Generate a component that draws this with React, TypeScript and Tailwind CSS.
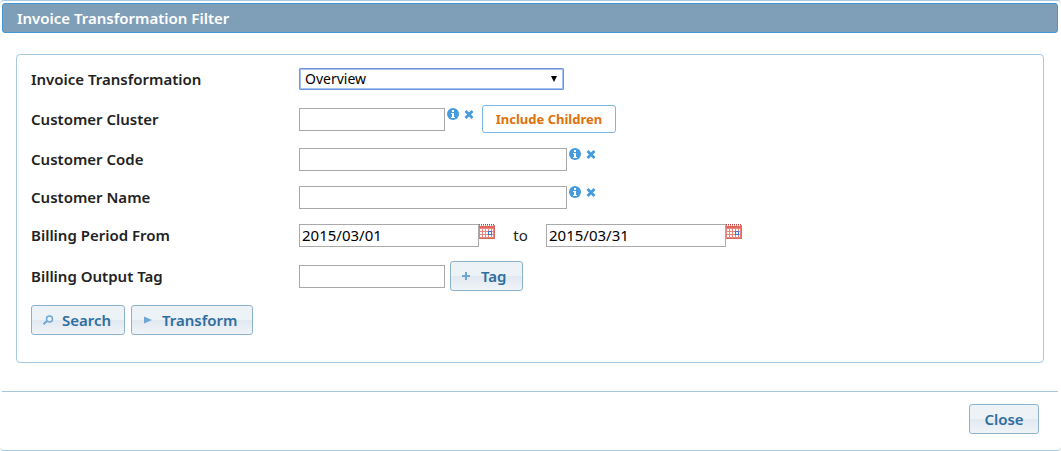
import clsx from "clsx";
import { ButtonHTMLAttributes, InputHTMLAttributes, PropsWithChildren } from "react";

type RowProps = PropsWithChildren<{
    label: string;
    htmlFor: string;
}>

function Row({ label, htmlFor, children }: RowProps) {
    return (
        <div className="flex min-h-6 items-center">
            <label htmlFor={htmlFor} className="w-[268px] shrink-0 text-[15px] leading-5 font-semibold text-[#222222]">
                {label}
            </label>
            <div className="flex items-center">{children}</div>
        </div>
    );
}

function TextBox({ className, ...props }: InputHTMLAttributes<HTMLInputElement>) {
    return (
        <input
            type="text"
            className={clsx("h-[23px] shrink-0 border border-[#a9a9a9] bg-white px-[2px] text-[15px] leading-5 text-black outline-none", className)}
            {...props}
        />
    );
}

function Button({ className, children, ...props }: ButtonHTMLAttributes<HTMLButtonElement>) {
    return (
        <button
            type="button"
            className={clsx(
                "flex h-[30px] shrink-0 items-center gap-2 rounded-[3px] border border-[#8db2ce] bg-linear-to-b from-[#edf2f6] from-50% via-[#e1e8f0] via-50% to-[#f0f4f8] text-[15px] leading-5 font-semibold text-[#2e6e9e]",
                className,
            )}
            {...props}
        >
            {children}
        </button>
    );
}

function LookupActions({ name }: { name: string }) {
    return (
        <div className="ml-[2px] flex items-center gap-[5px] self-start">
            <button type="button" aria-label={`${name} info`}>
                <svg width="12" height="12" viewBox="0 0 12 12" className="block">
                    <circle cx="6" cy="6" r="6" fill="#459bdd" />
                    <path d="M5 2h2v2H5zM4 5h3v4h1v1H4V9h1V6H4z" fill="#fff" />
                </svg>
            </button>
            <button type="button" aria-label={`Clear ${name}`}>
                <svg width="10" height="12" viewBox="0 0 10 12" className="block">
                    <path d="M1.500 3l7 7M8.500 3l-7 7" stroke="#459bdd" strokeWidth="2.800" />
                </svg>
            </button>
        </div>
    );
}

function CalendarButton({ name }: { name: string }) {
    return (
        <button type="button" aria-label={name} className="self-start">
            <svg width="16" height="15" viewBox="0 0 16 15" shapeRendering="crispEdges" className="block">
                <path d="M0 1h16v14H0z" fill="#ee857c" />
                <path d="M0 2h16v2H0z" fill="#e0685f" />
                <path d="M0 0h1v1H0zM2 0h1v1H2zM4 0h1v1H4zM6 0h1v1H6zM8 0h1v1H8zM10 0h1v1h-1zM12 0h1v1h-1zM14 0h1v1h-1z" fill="#a94a4a" />
                <path d="M1 1h1v1H1zM3 1h1v1H3zM5 1h1v1H5zM7 1h1v1H7zM9 1h1v1H9zM11 1h1v1h-1zM13 1h1v1h-1z" fill="#fff" />
                <path d="M1 5h2v2H1zM4 5h2v2H4zM7 5h2v2H7zM10 5h2v2h-2zM13 5h1v2h-1zM1 8h2v2H1zM4 8h2v2H4zM7 8h2v2H7zM10 8h2v2h-2zM13 8h1v2h-1zM1 11h2v2H1zM4 11h2v2H4zM7 11h2v2H7zM10 11h2v2h-2zM13 11h1v2h-1z" fill="#fff" />
                <path d="M9 7h4v4H9z" fill="#3f74e0" />
                <path d="M10 8h2v2h-2z" fill="#fff" />
                <path d="M0 14h16v1H0zM15 2h1v12h-1z" fill="#cf6a62" />
            </svg>
        </button>
    );
}

export default function App() {
    return (
        <div className="rounded-[4px] border-y border-[#a6c9e2] bg-white px-[2px] pt-[2px] font-['Noto_Sans','Open_Sans',sans-serif]">
            <header className="mr-px flex h-[30px] items-center rounded-[3px] border border-[#4297d7] bg-[#7f9fb8] px-[14px]">
                <h1 className="text-[15px] leading-5 font-semibold text-white">Invoice Transformation Filter</h1>
            </header>

            <form className="mr-[15px] ml-[14px] mt-[21px] flex flex-col gap-[14px] rounded-[4px] border border-[#a6c9e2] px-[14px] pt-3 pb-[27px]">
                <Row label="Invoice Transformation" htmlFor="transformation">
                    <div className="relative">
                        <select
                            id="transformation"
                            className="block h-[22px] w-[265px] appearance-none rounded-[1px] border border-[#6f93dc] bg-white pl-[5px] text-[14px] leading-5 text-black ring-1 ring-[#a5c2f5] outline-none ring-inset"
                        >
                            <option>Overview</option>
                        </select>
                        <svg width="6" height="6" viewBox="0 0 6 6" className="pointer-events-none absolute top-2 right-[7px]">
                            <path d="M0 0h6L3 6z" fill="#000" />
                        </svg>
                    </div>
                </Row>

                <Row label="Customer Cluster" htmlFor="cluster">
                    <div className="flex">
                        <TextBox id="cluster" className="w-[146px]" />
                        <LookupActions name="Customer Cluster" />
                    </div>
                    <button type="button" className="ml-2 h-7 w-[134px] rounded-[3px] border border-[#77b8e8] bg-white text-[13px] leading-5 font-bold text-[#e17009]">
                        Include Children
                    </button>
                </Row>

                <Row label="Customer Code" htmlFor="code">
                    <TextBox id="code" className="w-[268px]" />
                    <LookupActions name="Customer Code" />
                </Row>

                <Row label="Customer Name" htmlFor="name">
                    <TextBox id="name" className="w-[268px]" />
                    <LookupActions name="Customer Name" />
                </Row>

                <Row label="Billing Period From" htmlFor="from">
                    <TextBox id="from" defaultValue="2015/03/01" className="w-[180px]" />
                    <CalendarButton name="Pick start date" />
                    <label htmlFor="to" className="w-[51px] text-center text-[15px] leading-5 text-[#222222]">to</label>
                    <TextBox id="to" defaultValue="2015/03/31" className="w-[180px]" />
                    <CalendarButton name="Pick end date" />
                </Row>

                <Row label="Billing Output Tag" htmlFor="tag">
                    <TextBox id="tag" className="w-[146px]" />
                    <Button className="ml-[5px] w-[73px] pl-[10px]">
                        <svg width="12" height="12" viewBox="0 0 12 12">
                            <path d="M5 2v8M1 6h8" stroke="#6da8d5" strokeWidth="2" />
                        </svg>
                        Tag
                    </Button>
                </Row>

                <div className="flex gap-[6px]">
                    <Button className="w-[94px] pl-[10px]">
                        <svg width="12" height="12" viewBox="0 0 12 12" fill="none" stroke="#6da8d5">
                            <circle cx="7.500" cy="5" r="3" strokeWidth="1.500" />
                            <path d="M5 7l-3.500 3.200" strokeWidth="2" />
                        </svg>
                        Search
                    </Button>
                    <Button className="w-[122px] pl-[10px]">
                        <svg width="12" height="12" viewBox="0 0 12 12">
                            <path d="M2 2.500l8 3.500-8 3.500z" fill="#6da8d5" />
                        </svg>
                        Transform
                    </Button>
                </div>
            </form>

            <footer className="mt-7 mr-px flex justify-end border-t border-[#a6c9e2] px-[19px] pt-3 pb-4">
                <Button className="w-[70px] justify-center">Close</Button>
            </footer>
        </div>
    );
}
